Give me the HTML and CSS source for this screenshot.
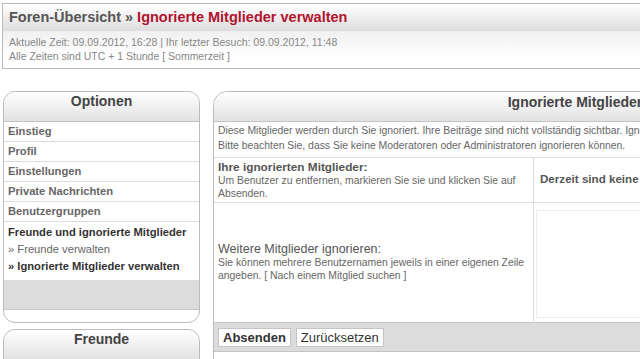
FILE: index.html
```html
<!DOCTYPE html>
<html lang="de">
<head>
    <meta charset="UTF-8">
    <title>Ignorierte Mitglieder verwalten</title>
    <link rel="stylesheet" href="styles.css">
</head>
<body>
    <div class="page-head">
        <h2 class="crumbs">Foren-Übersicht » <span class="current">Ignorierte Mitglieder verwalten</span></h2>
        <div class="info">
            <p>Aktuelle Zeit: 09.09.2012, 16:28 | Ihr letzter Besuch: 09.09.2012, 11:48</p>
            <p>Alle Zeiten sind UTC + 1 Stunde [ Sommerzeit ]</p>
        </div>
    </div>

    <div class="wrap">
        <div class="sidebar">
            <div class="panel closed">
                <h3 class="panel-head">Optionen</h3>
                <ul class="menu">
                    <li>Einstieg</li>
                    <li>Profil</li>
                    <li>Einstellungen</li>
                    <li>Private Nachrichten</li>
                    <li>Benutzergruppen</li>
                    <li class="group">
                        <span class="group-title">Freunde und ignorierte Mitglieder</span>
                        <span class="sub">» Freunde verwalten</span>
                        <span class="sub active">» Ignorierte Mitglieder verwalten</span>
                    </li>
                </ul>
                <div class="panel-gray"></div>
                <div class="panel-foot"></div>
            </div>
            <div class="panel">
                <h3 class="panel-head">Freunde</h3>
            </div>
        </div>

        <div class="main">
            <h3 class="main-head">Ignorierte Mitglieder</h3>
            <table class="form-table">
                <tr>
                    <td colspan="2" class="desc">
                        <p>Diese Mitglieder werden durch Sie ignoriert. Ihre Beiträge sind nicht vollständig sichtbar. Ignorierte Mitglieder können Ihnen keine Private Nachrichten senden.</p>
                        <p>Bitte beachten Sie, dass Sie keine Moderatoren oder Administratoren ignorieren können.</p>
                    </td>
                </tr>
                <tr class="row1">
                    <td class="label">
                        <b>Ihre ignorierten Mitglieder:</b><br>
                        <span>Um Benutzer zu entfernen, markieren Sie sie und klicken Sie auf Absenden.</span>
                    </td>
                    <td class="value"><b>Derzeit sind keine Mitglieder ignoriert.</b></td>
                </tr>
                <tr class="row2">
                    <td class="label">
                        <span class="big">Weitere Mitglieder ignorieren:</span><br>
                        <span>Sie können mehrere Benutzernamen jeweils in einer eigenen Zeile angeben. [ Nach einem Mitglied suchen ]</span>
                    </td>
                    <td class="value"><textarea class="names"></textarea></td>
                </tr>
                <tr>
                    <td colspan="2" class="buttons">
                        <button class="btn primary">Absenden</button>
                        <button class="btn">Zurücksetzen</button>
                    </td>
                </tr>
            </table>
        </div>
    </div>
</body>
</html>
```

FILE: styles.css
```css
html, body {
    margin: 0;
    padding: 0;
}
body {
    font-family: "Liberation Sans", Arial, sans-serif;
    background: #fff;
    color: #555;
    width: 640px;
    height: 359px;
    overflow: hidden;
}
p {
    margin: 0;
}
.page-head {
    margin: 3px 0 0 2px;
    width: 700px;
    border: 1px solid #bbb;
    border-right: none;
}
.crumbs {
    margin: 0;
    height: 26px;
    line-height: 26px;
    padding-left: 6px;
    font-size: 14.5px;
    color: #555;
    background: linear-gradient(#fff, #dedede);
    border-bottom: 1px solid #ddd;
}
.current {
    color: #b2132e;
}
.info {
    height: 37px;
    padding: 4px 0 0 6px;
    box-sizing: border-box;
    font-size: 10.5px;
    line-height: 14px;
    color: #888;
    background: linear-gradient(#f0f0f0, #fff 70%);
}
.wrap {
    display: flex;
    gap: 13px;
    margin: 22px 0 0 3px;
    width: 900px;
}
.sidebar {
    width: 197px;
    flex: none;
}
.panel {
    border: 1px solid #bbb;
    border-radius: 12px 12px 0 0;
    margin-bottom: 6px;
}
.panel.closed {
    border-radius: 12px;
}
.panel-head {
    margin: 0;
    height: 29px;
    line-height: 19px;
    text-align: center;
    font-size: 14px;
    color: #444;
    background: linear-gradient(#fff, #e2e2e2);
    border-radius: 12px 12px 0 0;
    border-bottom: 1px solid #c4c4c4;
}
.menu {
    list-style: none;
    margin: 0;
    padding: 0;
}
.menu li {
    height: 19px;
    line-height: 19px;
    padding-left: 4px;
    border-bottom: 1px solid #ddd;
    font-size: 11.2px;
    font-weight: bold;
    color: #666;
}
.menu li.group {
    height: auto;
    padding: 2px 0 5px 4px;
    line-height: 17px;
}
.group span {
    display: block;
}
.group-title {
    color: #333;
}
.sub {
    font-weight: normal;
}
.sub.active {
    font-weight: bold;
    color: #333;
}
.panel-gray {
    height: 28px;
    background: #dcdcdc;
    border-bottom: 1px solid #c8c8c8;
}
.panel-foot {
    height: 12px;
    border-radius: 0 0 12px 12px;
}
.main {
    width: 722px;
    flex: none;
    border: 1px solid #bbb;
    border-radius: 14px 14px 0 0;
}
.main-head {
    margin: 0;
    height: 29px;
    line-height: 21px;
    text-align: center;
    font-size: 14px;
    color: #444;
    background: linear-gradient(#fff, #e2e2e2);
    border-radius: 14px 14px 0 0;
    border-bottom: 1px solid #c4c4c4;
}
.form-table {
    width: 100%;
    border-collapse: collapse;
    font-size: 10.4px;
    color: #666;
}
.form-table td {
    padding: 0;
}
.desc {
    height: 34px;
    padding: 1px 0 0 4px !important;
    line-height: 15px;
    vertical-align: top;
    white-space: nowrap;
    border-bottom: 1px solid #ddd;
}
.row1 td {
    height: 44px;
    border-bottom: 1px solid #ddd;
}
.label {
    width: 315px;
    padding-left: 4px !important;
    line-height: 13px;
    vertical-align: middle;
    border-right: 1px solid #ddd;
}
.label b {
    font-size: 11.8px;
    color: #555;
}
.big {
    font-size: 12.5px;
    color: #555;
}
.value {
    padding-left: 6px !important;
    vertical-align: middle;
}
.value b {
    display: block;
    margin-top: -4px;
    font-size: 11.6px;
    color: #555;
    white-space: nowrap;
}
.row2 td {
    height: 113px;
}
.row2 .value {
    padding: 4px 0 2px 2px !important;
}
.names {
    display: block;
    box-sizing: border-box;
    width: 300px;
    height: 108px;
    border: 1px solid #eee;
    resize: none;
}
.buttons {
    height: 28px;
    padding: 0 0 0 4px !important;
    background: #dcdcdc;
    border-top: 1px solid #c4c4c4;
    border-bottom: 1px solid #c4c4c4;
}
.btn {
    font-family: "Liberation Sans", Arial, sans-serif;
    font-size: 13px;
    color: #333;
    background: #fff;
    border: 1px solid #c4c4c4;
    padding: 1px 4px;
    margin-right: 2px;
}
.btn.primary {
    font-weight: bold;
}
```
